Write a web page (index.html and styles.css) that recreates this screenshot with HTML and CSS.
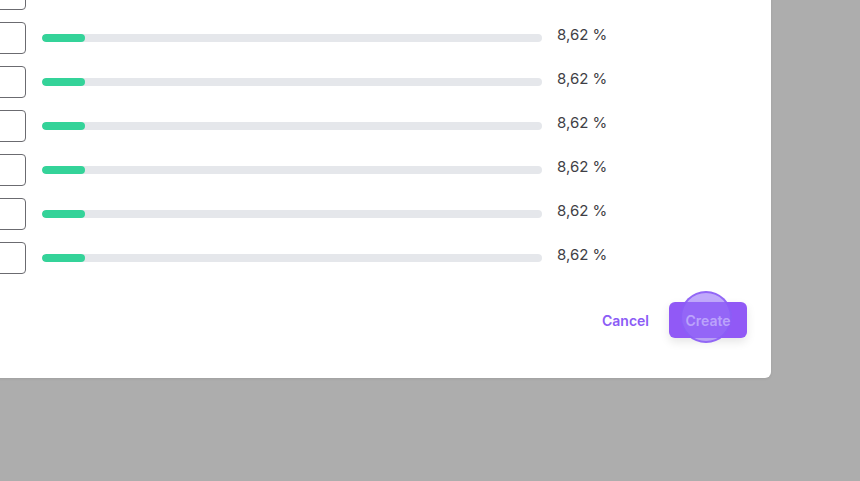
FILE: index.html
```html
<!DOCTYPE html>
<html lang="en">
<head>
<meta charset="UTF-8">
<meta name="viewport" content="width=device-width, initial-scale=1.0">
<title>Allocation</title>
<link rel="stylesheet" href="styles.css">
</head>
<body>
    <div class="overlay">
        <div class="modal">
            <div class="rows">
                <div class="row">
                    <input type="text" class="share-input">
                    <div class="bar"><div class="bar-fill" style="width: 8.62%"></div></div>
                    <span class="pct">8,62 %</span>
                </div>
                <div class="row">
                    <input type="text" class="share-input">
                    <div class="bar"><div class="bar-fill" style="width: 8.62%"></div></div>
                    <span class="pct">8,62 %</span>
                </div>
                <div class="row">
                    <input type="text" class="share-input">
                    <div class="bar"><div class="bar-fill" style="width: 8.62%"></div></div>
                    <span class="pct">8,62 %</span>
                </div>
                <div class="row">
                    <input type="text" class="share-input">
                    <div class="bar"><div class="bar-fill" style="width: 8.62%"></div></div>
                    <span class="pct">8,62 %</span>
                </div>
                <div class="row">
                    <input type="text" class="share-input">
                    <div class="bar"><div class="bar-fill" style="width: 8.62%"></div></div>
                    <span class="pct">8,62 %</span>
                </div>
                <div class="row">
                    <input type="text" class="share-input">
                    <div class="bar"><div class="bar-fill" style="width: 8.62%"></div></div>
                    <span class="pct">8,62 %</span>
                </div>
                <div class="row">
                    <input type="text" class="share-input">
                    <div class="bar"><div class="bar-fill" style="width: 8.62%"></div></div>
                    <span class="pct">8,62 %</span>
                </div>
            </div>
            <div class="actions">
                <button class="btn-cancel">Cancel</button>
                <button class="btn-create"><span class="click-dot"></span><span class="btn-label">Create</span></button>
            </div>
        </div>
    </div>
</body>
</html>
```

FILE: styles.css
```css
html, body{
    margin: 0;
    height: 100%;
}
body{
    background: #adadad;
    font-family: Inter, "Noto Sans", sans-serif;
    overflow: hidden;
}
.overlay{
    position: relative;
    height: 100%;
}
.modal{
    position: absolute;
    left: -40px;
    top: -40px;
    width: 811px;
    box-sizing: border-box;
    padding: 18px 24px 40px 24px;
    background: #fff;
    border-radius: 6px;
    box-shadow: 0 1px 3px rgba(0,0,0,0.08);
}
.rows{
    display: flex;
    flex-direction: column;
    gap: 12px;
}
.row{
    display: flex;
    align-items: center;
    height: 32px;
}
.share-input{
    width: 42px;
    height: 32px;
    box-sizing: border-box;
    border: 1px solid #6b6b70;
    border-radius: 4px;
    background: #fff;
    padding: 0;
}
.bar{
    width: 500px;
    height: 8px;
    margin-left: 16px;
    background: #e5e7eb;
    border-radius: 4px;
    overflow: hidden;
}
.bar-fill{
    height: 100%;
    background: #34d399;
    border-radius: 4px;
}
.pct{
    margin-left: 15px;
    margin-bottom: 7px;
    font-size: 15px;
    color: #3f3f46;
    line-height: 20px;
}
.actions{
    display: flex;
    justify-content: flex-end;
    align-items: center;
    gap: 20px;
    margin-top: 28px;
}
.btn-cancel{
    border: none;
    background: none;
    padding: 0;
    font-family: inherit;
    font-size: 14px;
    font-weight: 600;
    color: #8b5cf6;
}
.btn-create{
    position: relative;
    width: 78px;
    height: 36px;
    border: none;
    border-radius: 6px;
    background: #9159f6;
    color: #bba3fb;
    font-family: inherit;
    font-size: 14px;
    font-weight: 600;
    box-shadow: 0 4px 10px rgba(0,0,0,0.1);
}
.btn-label{
    position: relative;
}
.click-dot{
    position: absolute;
    left: 11px;
    top: -11px;
    width: 52px;
    height: 52px;
    box-sizing: border-box;
    border-radius: 50%;
    border: 2px solid rgba(139,92,246,0.85);
    background: rgba(150,112,249,0.6);
}
```
